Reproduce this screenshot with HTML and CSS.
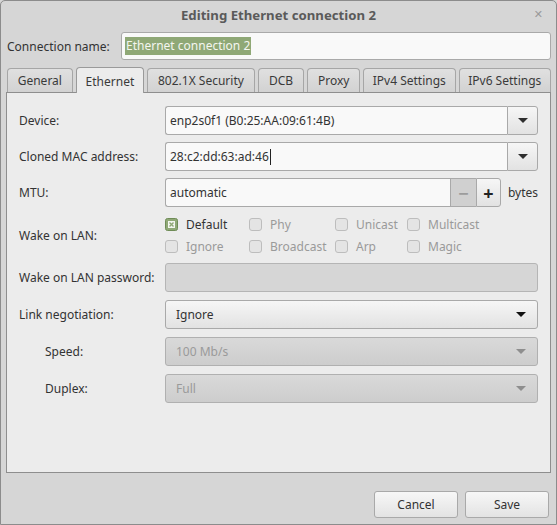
FILE: index.html
```html
<!DOCTYPE html>
<html>
<head>
<meta charset="utf-8">
<link rel="stylesheet" href="styles.css">
</head>
<body>
<div class="window">
  <div class="titlebar">
    <span class="title">Editing Ethernet connection 2</span>
    <span class="close">✕</span>
  </div>
  <div class="content">
    <div class="name-row">
      <span class="name-label">Connection name:</span>
      <div class="entry name-entry"><span class="selected">Ethernet connection 2</span></div>
    </div>
    <div class="tabs">
      <div class="tab t-general">General</div>
      <div class="tab active t-eth">Ethernet</div>
      <div class="tab t-sec">802.1X Security</div>
      <div class="tab t-dcb">DCB</div>
      <div class="tab t-proxy">Proxy</div>
      <div class="tab t-v4">IPv4 Settings</div>
      <div class="tab t-v6">IPv6 Settings</div>
    </div>
    <div class="panel">
      <div class="row r-a">
        <div class="label">Device:</div>
        <div class="combo-entry">
          <div class="ce-text">enp2s0f1 (B0:25:AA:09:61:4B)</div>
          <div class="ce-btn"><span class="arrow"></span></div>
        </div>
      </div>
      <div class="row r-a">
        <div class="label">Cloned MAC address:</div>
        <div class="combo-entry">
          <div class="ce-text">28:c2:dd:63:ad:46<span class="cursor"></span></div>
          <div class="ce-btn"><span class="arrow"></span></div>
        </div>
      </div>
      <div class="row r-mtu">
        <div class="label">MTU:</div>
        <div class="spin">
          <div class="spin-text">automatic</div>
          <div class="spin-btn minus">−</div>
          <div class="spin-btn plus">+</div>
        </div>
        <div class="unit">bytes</div>
      </div>
      <div class="row r-wol">
        <div class="label">Wake on LAN:</div>
        <div class="checks">
          <div class="check on"><span class="box"><svg width="13" height="13" viewBox="0 0 13 13"><rect x="0.5" y="0.5" width="12" height="12" rx="2" fill="#8fa876" stroke="#6f8c57"/><rect x="3" y="3" width="7" height="7" fill="#f4f6f0"/><path d="M4.5 4.5 L8.5 8.5 M8.5 4.5 L4.5 8.5" stroke="#8fa876" stroke-width="1.4"/></svg></span>Default</div>
          <div class="check"><span class="box"></span>Phy</div>
          <div class="check"><span class="box"></span>Unicast</div>
          <div class="check"><span class="box"></span>Multicast</div>
          <div class="check"><span class="box"></span>Ignore</div>
          <div class="check"><span class="box"></span>Broadcast</div>
          <div class="check"><span class="box"></span>Arp</div>
          <div class="check"><span class="box"></span>Magic</div>
        </div>
      </div>
      <div class="row r-b">
        <div class="label">Wake on LAN password:</div>
        <div class="entry disabled-entry"></div>
      </div>
      <div class="row r-b">
        <div class="label">Link negotiation:</div>
        <div class="combo">Ignore<span class="arrow"></span></div>
      </div>
      <div class="row r-b">
        <div class="label indent">Speed:</div>
        <div class="combo disabled">100 Mb/s<span class="arrow"></span></div>
      </div>
      <div class="row r-b">
        <div class="label indent">Duplex:</div>
        <div class="combo disabled">Full<span class="arrow"></span></div>
      </div>
    </div>
    <div class="actions">
      <div class="button">Cancel</div>
      <div class="button">Save</div>
    </div>
  </div>
</div>
</body>
</html>
```

FILE: styles.css
```css
* { box-sizing: border-box; }
html, body { margin: 0; padding: 0; background: #d6d6d6; }
body {
  font-family: "Noto Sans", "DejaVu Sans", sans-serif;
  font-size: 12px;
  color: #333333;
}
.window {
  width: 557px;
  height: 525px;
  border: 1px solid #8c8c8c;
  border-radius: 5px 5px 0 0;
  background: #d6d6d6;
  display: flex;
  flex-direction: column;
}
.titlebar {
  height: 31px;
  display: flex;
  align-items: center;
  justify-content: center;
  position: relative;
}
.title {
  font-weight: bold;
  font-size: 13.2px;
  color: #5a5a5a;
  margin-top: -4px;
}
.close {
  position: absolute;
  right: 13px;
  top: 5px;
  font-size: 11px;
  font-weight: bold;
  color: #9a9a9a;
}
.content {
  padding: 0 5px;
  display: flex;
  flex-direction: column;
}
.name-row {
  height: 28px;
  display: flex;
  align-items: center;
}
.name-label { padding-left: 1px; }
.entry {
  background: #f9f9f9;
  border: 1px solid #a9a9a9;
  border-radius: 3px;
}
.name-entry {
  margin-left: auto;
  width: 430px;
  height: 28px;
  display: flex;
  align-items: center;
  padding-left: 3px;
}
.selected {
  background: #8fa876;
  color: #f4f6f0;
  line-height: 18px;
  padding: 0 1px;
}
.tabs {
  margin-top: 7px;
  height: 25px;
  display: flex;
  align-items: flex-end;
  gap: 3px;
  padding-left: 1px;
}
.tab {
  height: 24px;
  border: 1px solid #a6a6a6;
  border-bottom: none;
  border-radius: 4px 4px 0 0;
  background: linear-gradient(#e0e0e0, #d2d2d2);
  display: flex;
  align-items: center;
  justify-content: center;
  color: #3a3a3a;
}
.tab.active {
  height: 26px;
  margin-bottom: -1px;
  background: #ececec;
  border-color: #9a9a9a;
  position: relative;
  z-index: 1;
  padding-top: 2px;
}
.t-general { width: 66px; }
.t-eth { width: 69px; }
.t-sec { width: 108px; }
.t-dcb { width: 47px; }
.t-proxy { width: 53px; }
.t-v4 { width: 93px; }
.t-v6 { width: 93px; }
.panel {
  height: 381px;
  border: 1px solid #8e8e8e;
  background: #ececec;
  padding: 13px 12px 0 12px;
  display: flex;
  flex-direction: column;
}
.row {
  display: flex;
  align-items: center;
}
.label {
  width: 146px;
  flex: none;
}
.label.indent { padding-left: 26px; }
.r-a { height: 29px; margin-bottom: 7px; }
.r-mtu { height: 29px; margin-bottom: 6px; }
.r-wol { height: 44px; margin-bottom: 6px; }
.r-b { height: 29px; margin-bottom: 8px; }
.combo-entry {
  width: 373px;
  height: 29px;
  display: flex;
}
.ce-text {
  flex: 1;
  background: #f9f9f9;
  border: 1px solid #a9a9a9;
  border-right: none;
  border-radius: 3px 0 0 3px;
  display: flex;
  align-items: center;
  padding-left: 4px;
}
.cursor {
  display: inline-block;
  width: 1px;
  height: 16px;
  background: #222;
  margin-left: 1px;
}
.ce-btn {
  width: 31px;
  border: 1px solid #a9a9a9;
  border-radius: 0 3px 3px 0;
  background: linear-gradient(#f6f6f6, #e2e2e2);
  display: flex;
  align-items: center;
  justify-content: center;
}
.arrow {
  width: 0;
  height: 0;
  border-left: 5px solid transparent;
  border-right: 5px solid transparent;
  border-top: 5px solid #2e2e2e;
}
.spin {
  width: 337px;
  height: 29px;
  display: flex;
}
.spin-text {
  flex: 1;
  background: #f9f9f9;
  border: 1px solid #a9a9a9;
  border-right: none;
  border-radius: 3px 0 0 3px;
  display: flex;
  align-items: center;
  padding-left: 4px;
}
.spin-btn {
  width: 26px;
  border: 1px solid #a9a9a9;
  display: flex;
  align-items: center;
  justify-content: center;
  font-size: 18px;
  font-weight: bold;
}
.spin-btn.minus {
  background: #d0d0d0;
  color: #9c9c9c;
  border-right: none;
}
.spin-btn.plus {
  width: 25px;
  background: linear-gradient(#f6f6f6, #e2e2e2);
  color: #222;
  border-radius: 0 3px 3px 0;
}
.unit { margin-left: 7px; }
.checks {
  display: grid;
  grid-template-columns: 84px 86px 72px auto;
  grid-auto-rows: 22px;
}
.check {
  display: flex;
  align-items: center;
  color: #9a9a9a;
}
.check.on { color: #333333; }
.box {
  width: 13px;
  height: 13px;
  border: 1px solid #bdbdbd;
  border-radius: 3px;
  background: #e4e4e4;
  margin-right: 8px;
  flex: none;
}
.check.on .box {
  border: none;
  background: none;
  display: flex;
}
.disabled-entry {
  width: 373px;
  height: 29px;
  background: #d6d6d6;
  border-color: #b5b5b5;
}
.combo {
  width: 373px;
  height: 29px;
  border: 1px solid #a9a9a9;
  border-radius: 3px;
  background: linear-gradient(#f6f6f6, #e2e2e2);
  display: flex;
  align-items: center;
  justify-content: space-between;
  padding: 0 11px 0 10px;
}
.combo .arrow { border-top-color: #111; }
.combo.disabled {
  background: linear-gradient(#d9d9d9, #cdcdcd);
  border-color: #b0b0b0;
  color: #9a9a9a;
}
.combo.disabled .arrow { border-top-color: #8e8e8e; }
.actions {
  margin-top: 18px;
  display: flex;
  justify-content: flex-end;
  gap: 7px;
  padding-right: 2px;
}
.button {
  width: 84px;
  height: 27px;
  border: 1px solid #a9a9a9;
  border-radius: 3px;
  background: linear-gradient(#f7f7f7, #e3e3e3);
  display: flex;
  align-items: center;
  justify-content: center;
  color: #333;
}
```
